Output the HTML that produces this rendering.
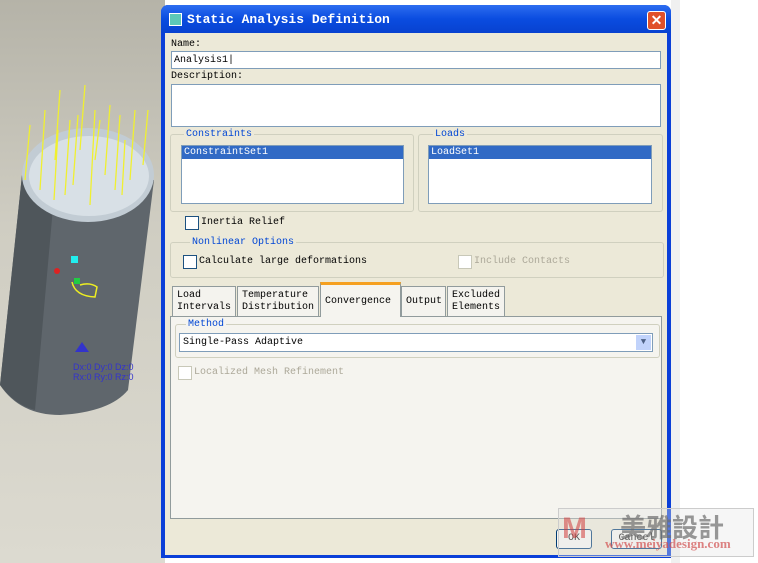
<!DOCTYPE html><html><head><style>
body{margin:0;width:758px;height:563px;overflow:hidden;position:relative;font-family:"Liberation Mono","Noto Sans CJK SC",monospace;font-size:10px;background:#fff}
.a{position:absolute}
.bg{left:0;top:0;width:165px;height:563px;background:linear-gradient(180deg,#b5b3a8 0%,#cfcdc2 40%,#dcdad0 100%)}
.dlg{left:161px;top:5px;width:510px;height:553px;background:#0a3fd8;border-radius:7px 7px 0 0}
.title{left:161px;top:5px;width:510px;height:28px;background:linear-gradient(#2d6df0,#0a4ce0 50%,#0842d0);border-radius:7px 7px 0 0}
.body{left:165px;top:33px;width:502px;height:522px;background:#ece9d8}
.in{background:#fff;border:1px solid #7f9db9}
.grp{border:1px solid #d0d0bf;border-radius:3px}
.lbl{background:#ece9d8;color:#0046d5;padding:0 2px}
.cb{width:12px;height:12px;border:1px solid #1c5180;background:#fff}
.tab{background:#f4f3ee;border:1px solid #919b9c;border-bottom:none;line-height:12px;padding:3px 4px 0;box-sizing:border-box}
.btn{border:1px solid #003c74;border-radius:3px;background:#f4f4f0;text-align:center;line-height:17px}
</style></head><body>
<div class="a bg"></div>
<svg class="a" style="left:0;top:0" width="165" height="563">
<path d="M22 175 L0 385 Q20 415 60 415 Q110 412 128 390 L154 180 Z" fill="#5f666c"/>
<path d="M22 175 L0 385 Q15 405 35 410 L55 185 Z" fill="#4f565b"/>
<ellipse cx="88" cy="175" rx="66" ry="47" fill="#c2ccd4"/>
<ellipse cx="89" cy="176" rx="60" ry="40" fill="#d8e0e6"/>
<g stroke="#f0f030" stroke-width="1.3">
<path d="M30 125L25 180M45 110L40 190M60 90L55 160M70 120L65 195M85 85L80 150M95 110L90 205M110 105L105 175M120 115L115 190M135 110L130 180M148 110L143 165M78 115L73 185M100 120L95 160M58 130L54 200M125 140L122 195"/></g>
<rect x="71" y="256" width="7" height="7" fill="#2ee"/><circle cx="57" cy="271" r="3" fill="#d22"/>
<rect x="74" y="278" width="6" height="6" fill="#2c4"/>
<path d="M72 282 Q75 296 95 297 L97 287 Q90 282 80 285" stroke="#ee2" fill="none" stroke-width="1.5"/>
<path d="M75 352 L82 342 L89 352Z" fill="#33c"/>
<text x="73" y="370" fill="#33c" font-size="9" font-family="Liberation Sans">Dx:0 Dy:0 Dz:0</text>
<text x="73" y="380" fill="#33c" font-size="9" font-family="Liberation Sans">Rx:0 Ry:0 Rz:0</text>
</svg>
<div class="a dlg"></div>
<div class="a title"></div>
<div class="a" style="left:169px;top:13px;width:11px;height:11px;background:#5cc8b8;border:1px solid #fff"></div>
<div class="a" style="left:187px;top:12px;color:#fff;font-weight:bold;font-size:13px">Static Analysis Definition</div>
<div class="a" style="left:647px;top:11px;width:17px;height:17px;background:#e0502a;border:1px solid #fff;border-radius:3px;color:#fff;font:bold 14px 'Liberation Sans';text-align:center;line-height:17px">✕</div>
<div class="a body"></div>
<div class="a" style="left:171px;top:39px">Name:</div>
<div class="a in" style="left:171px;top:51px;width:488px;height:16px"><span style="position:absolute;left:2px;top:3px">Analysis1|</span></div>
<div class="a" style="left:171px;top:71px">Description:</div>
<div class="a in" style="left:171px;top:84px;width:488px;height:41px"></div>
<div class="a grp" style="left:170px;top:134px;width:242px;height:76px"></div>
<div class="a lbl" style="left:184px;top:129px">Constraints</div>
<div class="a in" style="left:181px;top:145px;width:221px;height:57px"><div style="background:#316ac5;color:#fff;height:13px;padding-left:2px;line-height:14px">ConstraintSet1</div></div>
<div class="a grp" style="left:418px;top:134px;width:243px;height:76px"></div>
<div class="a lbl" style="left:433px;top:129px">Loads</div>
<div class="a in" style="left:428px;top:145px;width:222px;height:57px"><div style="background:#316ac5;color:#fff;height:13px;padding-left:2px;line-height:14px">LoadSet1</div></div>
<div class="a cb" style="left:185px;top:216px"></div><div class="a" style="left:201px;top:217px">Inertia Relief</div>
<div class="a grp" style="left:170px;top:242px;width:492px;height:34px"></div>
<div class="a lbl" style="left:190px;top:237px">Nonlinear Options</div>
<div class="a cb" style="left:183px;top:255px"></div><div class="a" style="left:199px;top:256px">Calculate large deformations</div>
<div class="a cb" style="left:458px;top:255px;border-color:#c8c8b8"></div><div class="a" style="left:474px;top:256px;color:#aca899">Include Contacts</div>
<div class="a" style="left:170px;top:316px;width:490px;height:201px;border:1px solid #919b9c;background:#f5f4ef"></div>
<div class="a tab" style="left:172px;top:286px;width:64px;height:30px">Load<br>Intervals</div>
<div class="a tab" style="left:237px;top:286px;width:82px;height:30px">Temperature<br>Distribution</div>
<div class="a tab" style="left:320px;top:282px;width:81px;height:35px;background:#f5f4ef;border-top:3px solid #f5a020;line-height:28px">Convergence</div>
<div class="a tab" style="left:401px;top:286px;width:45px;height:30px;line-height:24px">Output</div>
<div class="a tab" style="left:447px;top:286px;width:58px;height:30px">Excluded<br>Elements</div>
<div class="a grp" style="left:175px;top:324px;width:483px;height:32px"></div>
<div class="a lbl" style="left:186px;top:319px;background:#f5f4ef">Method</div>
<div class="a in" style="left:179px;top:333px;width:472px;height:17px"><span style="position:absolute;left:3px;top:3px">Single-Pass Adaptive</span><div style="position:absolute;right:1px;top:1px;width:15px;height:15px;background:#c1d3fb;color:#4d6185;text-align:center;font-size:9px;line-height:15px">▼</div></div>
<div class="a cb" style="left:178px;top:366px;border-color:#c8c8b8"></div><div class="a" style="left:194px;top:367px;color:#aca899">Localized Mesh Refinement</div>
<div class="a btn" style="left:556px;top:529px;width:34px;height:18px">OK</div>
<div class="a btn" style="left:611px;top:529px;width:49px;height:18px">Cancel</div>
<div class="a" style="left:671px;top:0;width:9px;height:563px;background:#f0f0f0"></div>
<div class="a" style="left:558px;top:508px;width:194px;height:47px;background:rgba(230,230,230,.35);border:1px solid #ccc"></div>
<div class="a" style="left:562px;top:512px;font:bold 30px 'Liberation Sans';color:rgba(210,60,60,.55)">M</div>
<div class="a" style="left:620px;top:508px;font:bold 26px 'Noto Sans CJK SC',sans-serif;color:rgba(110,110,110,.7)">美雅設計</div>
<div class="a" style="left:605px;top:536px;font:bold 13px 'Liberation Serif';color:rgba(210,80,80,.7)">www.meiyadesign.com</div>
</body></html>
